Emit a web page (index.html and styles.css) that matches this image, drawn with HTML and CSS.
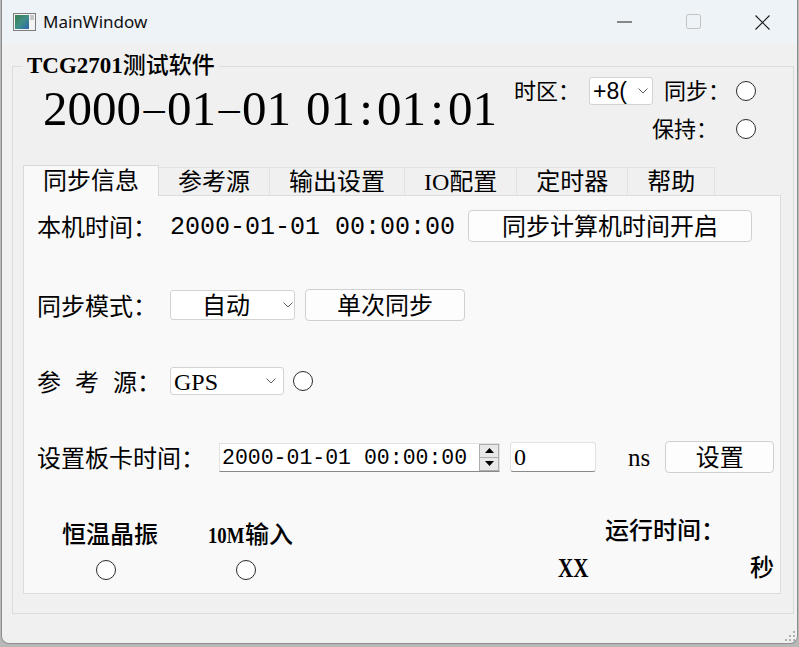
FILE: index.html
```html
<!DOCTYPE html>
<html lang="zh-CN">
<head>
<meta charset="utf-8">
<title>MainWindow</title>
<link rel="stylesheet" href="styles.css">
</head>
<body>
<div class="window">
  <div class="titlebar">
    <svg class="app-icon" width="23" height="18" viewBox="0 0 23 18">
      <defs>
        <linearGradient id="icg" x1="0" y1="0" x2="1" y2="1">
          <stop offset="0" stop-color="#3b7d4c"/>
          <stop offset="0.5" stop-color="#3e8f86"/>
          <stop offset="1" stop-color="#2e63b0"/>
        </linearGradient>
      </defs>
      <rect x="0.5" y="0.5" width="22" height="17" fill="#f4f4f4" stroke="#7d7d7d"/>
      <rect x="2" y="2" width="14" height="14" fill="url(#icg)"/>
      <rect x="17" y="2" width="4" height="5" fill="#c6c6c6"/>
    </svg>
    <span class="title">MainWindow</span>
    <div class="controls">
      <span class="ctl"><svg width="16" height="2" viewBox="0 0 16 2"><rect x="0" y="0.5" width="15" height="1" fill="#1a1a1a"/></svg></span>
      <span class="ctl"><svg width="16" height="16" viewBox="0 0 16 16"><rect x="0.5" y="0.5" width="14" height="14" rx="2" fill="none" stroke="#c2c2c2"/></svg></span>
      <span class="ctl ctl-close"><svg width="16" height="16" viewBox="0 0 16 16"><path d="M0.5 0.5 L14.5 14.5 M14.5 0.5 L0.5 14.5" stroke="#1a1a1a" stroke-width="1.1" fill="none"/></svg></span>
    </div>
  </div>

  <div class="client">
    <fieldset class="group">
      <legend><span class="bl">TCG2701</span><span class="bc">测试软件</span></legend>

      <div class="header">
        <div class="bigtime">2000<span class="dash"><span class="dash-g">-</span></span>01<span class="dash"><span class="dash-g">-</span></span>01<span class="gap"></span>01<span class="colon">:</span>01<span class="colon">:</span>01</div>
        <div class="status">
          <div class="status-row">
            <span class="slbl">时区：</span>
            <div class="combo tz">
              <span class="tz-text">+8(</span>
              <svg class="chev" width="10" height="6" viewBox="0 0 10 6"><polyline points="0.5,0.5 5,5 9.5,0.5" fill="none" stroke="#606060"/></svg>
            </div>
            <span class="slbl sync-lbl">同步：</span>
            <span class="radio"></span>
          </div>
          <div class="status-row end">
            <span class="slbl hold-lbl">保持：</span>
            <span class="radio"></span>
          </div>
        </div>
      </div>

      <div class="tabs">
        <div class="tabbar">
          <div class="tab active">同步信息</div>
          <div class="tab">参考源</div>
          <div class="tab">输出设置</div>
          <div class="tab">IO配置</div>
          <div class="tab">定时器</div>
          <div class="tab">帮助</div>
        </div>
        <div class="pane">
          <div class="row">
            <span class="lbl lbl-w">本机时间：</span>
            <span class="mono">2000-01-01 00:00:00</span>
            <div class="btn btn-sync">同步计算机时间开启</div>
          </div>

          <div class="row r2">
            <span class="lbl lbl-w">同步模式：</span>
            <div class="combo mode">
              <span class="mode-text">自动</span>
              <svg class="chev" width="10" height="6" viewBox="0 0 10 6"><polyline points="0.5,0.5 5,5 9.5,0.5" fill="none" stroke="#606060"/></svg>
            </div>
            <div class="btn btn-once">单次同步</div>
          </div>

          <div class="row r3">
            <span class="lbl lbl-w spaced">参 考 源：</span>
            <div class="combo src">
              <span class="src-text">GPS</span>
              <svg class="chev" width="10" height="6" viewBox="0 0 10 6"><polyline points="0.5,0.5 5,5 9.5,0.5" fill="none" stroke="#606060"/></svg>
            </div>
            <span class="radio src-radio"></span>
          </div>

          <div class="row r4">
            <span class="lbl lbl-w4">设置板卡时间：</span>
            <div class="spin">
              <span class="spin-text">2000-01-01 00:00:00</span>
              <div class="spin-btns">
                <span class="spin-btn"><svg width="9" height="5" viewBox="0 0 9 5"><polygon points="0,5 4.5,0 9,5" fill="#000"/></svg></span>
                <span class="spin-btn"><svg width="9" height="5" viewBox="0 0 9 5"><polygon points="0,0 4.5,5 9,0" fill="#000"/></svg></span>
              </div>
            </div>
            <div class="edit">0</div>
            <span class="ns">ns</span>
            <div class="btn btn-set">设置</div>
          </div>

          <div class="bottom">
            <div class="col col1">
              <span class="blbl bc">恒温晶振</span>
              <span class="radio"></span>
            </div>
            <div class="col col2">
              <span class="blbl"><span class="narrow">10M</span><span class="bc">输入</span></span>
              <span class="radio"></span>
            </div>
            <div class="runtime">
              <div class="rt-title bc">运行时间：</div>
              <div class="rt-row">
                <span class="xx">XX</span>
                <span class="sec bc">秒</span>
              </div>
            </div>
          </div>
        </div>
      </div>
    </fieldset>
  </div>

  <svg class="grip" width="11" height="11" viewBox="0 0 11 11">
    <rect x="8" y="0" width="2" height="2" fill="#b0b0b0"/>
    <rect x="4" y="4" width="2" height="2" fill="#b0b0b0"/>
    <rect x="8" y="4" width="2" height="2" fill="#b0b0b0"/>
    <rect x="0" y="8" width="2" height="2" fill="#b0b0b0"/>
    <rect x="4" y="8" width="2" height="2" fill="#b0b0b0"/>
    <rect x="8" y="8" width="2" height="2" fill="#b0b0b0"/>
  </svg>
</div>
</body>
</html>
```

FILE: styles.css
```css
* { box-sizing: border-box; }

html, body {
  margin: 0;
  padding: 0;
}

body {
  width: 799px;
  height: 647px;
  overflow: hidden;
  background: #b8b8b8;
  font-family: "Liberation Serif", "Noto Sans CJK SC", serif;
  color: #000;
}

.bl { font-weight: 700; }
.bc { font-weight: 500; }

.window {
  position: relative;
  margin-left: 1px;
  width: 797px;
  height: 644px;
  background: #f0f0f0;
  border: 1px solid #8e8e8e;
  border-top: none;
  border-radius: 0 0 8px 8px;
  overflow: hidden;
  display: flex;
  flex-direction: column;
}

/* ---------- title bar ---------- */
.titlebar {
  height: 44px;
  flex: none;
  background: #eef3f8;
  display: flex;
  align-items: center;
  padding-left: 11px;
}

.app-icon { flex: none; }

.title {
  margin-left: 7px;
  font-family: "Noto Sans", sans-serif;
  font-size: 17px;
  line-height: 20px;
  color: #111;
}

.controls {
  margin-left: auto;
  display: flex;
  height: 44px;
}

.ctl {
  width: 69px;
  height: 44px;
  display: flex;
  align-items: center;
  justify-content: center;
}

.ctl-close { padding-top: 1px; }

/* ---------- client / group box ---------- */
.client {
  flex: 1;
  padding: 11px 0 0 10px;
}

.group {
  margin: 0;
  width: 782px;
  min-width: 0;
  border: 1px solid #dcdcdc;
  padding: 0 12px 19px 10px;
}

.group legend {
  padding: 0 4px;
  font-size: 23px;
  line-height: 22px;
}

.header {
  display: flex;
  height: 88px;
}

.bigtime {
  margin-left: 20px;
  margin-top: 7px;
  font-family: "Liberation Serif", serif;
  font-size: 49px;
  line-height: 50px;
  white-space: nowrap;
  display: flex;
}

.dash {
  display: inline-block;
  width: 26px;
  text-align: center;
}

.dash-g {
  display: inline-block;
  transform: scale(1.7, 0.55);
}

.colon {
  display: inline-block;
  width: 22px;
  text-align: center;
}

.gap {
  display: inline-block;
  width: 15px;
}

.status {
  margin-left: auto;
  margin-right: 25px;
  display: flex;
  flex-direction: column;
}

.status-row {
  display: flex;
  align-items: center;
  height: 28px;
}

.status-row.end {
  justify-content: flex-end;
  margin-top: 10px;
}

.slbl {
  font-size: 22px;
  line-height: 26px;
  padding-top: 2px;
  white-space: nowrap;
}

.sync-lbl { margin-left: 11px; margin-right: 6px; }
.hold-lbl { margin-right: 18px; }

.radio {
  flex: none;
  width: 20px;
  height: 20px;
  border: 1px solid #2a2a2a;
  border-radius: 50%;
  background: #fff;
}

/* ---------- combo boxes ---------- */
.combo {
  flex: none;
  display: flex;
  align-items: center;
  background: #fff;
  border: 1px solid #d3d3d3;
  border-radius: 3px;
}

.chev { flex: none; }

.tz {
  margin-left: 9px;
  width: 64px;
  height: 28px;
  padding-left: 3px;
}

.tz-text {
  width: 35px;
  overflow: hidden;
  white-space: nowrap;
  font-family: "Liberation Sans", sans-serif;
  font-size: 23px;
  line-height: 26px;
}

.tz .chev { margin-left: 10px; }

.mode {
  width: 125px;
  height: 30px;
}

.mode-text {
  width: 110px;
  text-align: center;
  font-size: 24px;
  line-height: 26px;
  padding-top: 2px;
}

.mode .chev { margin-left: 2px; }

.src {
  width: 114px;
  height: 28px;
  padding-left: 3px;
}

.src-text {
  width: 90px;
  font-size: 24px;
  line-height: 26px;
  padding-top: 1px;
}

.src .chev { margin-left: 2px; }

/* ---------- tabs ---------- */
.tabbar {
  display: flex;
  align-items: flex-end;
  height: 30px;
  position: relative;
  z-index: 1;
}

.tab {
  height: 28px;
  padding: 1px 19px 0;
  border: 1px solid #e2e2e2;
  border-left: none;
  border-bottom: none;
  background: #f0f0f0;
  font-size: 24px;
  line-height: 27px;
  white-space: nowrap;
}

.tab.active {
  height: 31px;
  margin-bottom: -1px;
  padding: 1px 19px 0;
  background: #f9f9f9;
  border: 1px solid #d9d9d9;
  border-bottom: none;
  line-height: 28px;
}

.pane {
  height: 399px;
  background: #f9f9f9;
  border: 1px solid #dcdcdc;
  padding: 14px 0 0 13px;
  font-size: 24px;
}

.row {
  display: flex;
  align-items: center;
  height: 32px;
}

.r2 { margin-top: 47px; }
.r3 { margin-top: 44px; }
.r4 { margin-top: 44px; }

.lbl {
  line-height: 28px;
  padding-top: 4px;
  white-space: nowrap;
}

.lbl-w { width: 133px; flex: none; }
.lbl-w4 { width: 182px; flex: none; }

.spaced { word-spacing: 8px; }

.mono {
  font-family: "Liberation Mono", monospace;
  font-size: 25px;
  line-height: 28px;
  padding-top: 4px;
  white-space: nowrap;
}

.btn {
  flex: none;
  height: 32px;
  display: flex;
  align-items: center;
  justify-content: center;
  background: #fdfdfd;
  border: 1px solid #d0d0d0;
  border-radius: 4px;
  font-size: 24px;
  line-height: 27px;
  padding-top: 3px;
}

.btn-sync { margin-left: 13px; width: 284px; }
.btn-once { margin-left: 10px; width: 160px; }
.btn-set { margin-left: 15px; width: 109px; }

.src-radio { margin-left: 9px; }

/* ---------- spin box & line edit ---------- */
.spin {
  flex: none;
  width: 281px;
  height: 29px;
  display: flex;
  align-items: center;
  background: #fff;
  border: 1px solid #e2e2e2;
  border-bottom-color: #8a8a8a;
  padding-left: 2px;
}

.spin-text {
  font-family: "Liberation Mono", monospace;
  font-size: 21.5px;
  line-height: 26px;
  padding-top: 1px;
  white-space: nowrap;
}

.spin-btns {
  margin-left: auto;
  width: 20px;
  height: 27px;
  display: flex;
  flex-direction: column;
}

.spin-btn {
  flex: 1;
  display: flex;
  align-items: center;
  justify-content: center;
  background: #e8e8e8;
  border: 1px solid #adadad;
}

.spin-btn + .spin-btn { border-top: none; }

.edit {
  flex: none;
  margin-left: 10px;
  width: 86px;
  height: 30px;
  background: #fff;
  border: 1px solid #e2e2e2;
  border-bottom-color: #8a8a8a;
  border-radius: 3px;
  padding: 1px 0 0 3px;
  font-size: 24px;
  line-height: 27px;
}

.ns {
  margin-left: 32px;
  font-size: 25px;
  line-height: 28px;
  padding-top: 2px;
}

/* ---------- bottom section ---------- */
.bottom {
  display: flex;
  margin-top: 46px;
}

.col {
  display: flex;
  flex-direction: column;
  align-items: flex-start;
  padding-top: 4px;
}

.col1 { margin-left: 25px; }
.col2 { margin-left: 50px; }

.blbl {
  line-height: 24px;
  white-space: nowrap;
}

.narrow {
  display: inline-block;
  width: 37px;
  font-weight: 700;
  transform: scaleX(0.78);
  transform-origin: left center;
  white-space: nowrap;
}

.col .radio { margin-top: 13px; }
.col1 .radio { margin-left: 34px; }
.col2 .radio { margin-left: 28px; }

.runtime {
  margin-left: auto;
  margin-right: 6px;
  width: 216px;
}

.rt-title {
  padding-left: 47px;
  line-height: 24px;
}

.rt-row {
  display: flex;
  justify-content: space-between;
  align-items: flex-end;
  margin-top: 13px;
  height: 24px;
  line-height: 24px;
}

.xx {
  display: inline-block;
  width: 30px;
  font-size: 28px;
  font-weight: 700;
  transform: scaleX(0.75);
  transform-origin: left center;
  white-space: nowrap;
}

/* ---------- size grip (overlays corner) ---------- */
.grip {
  position: absolute;
  right: 1px;
  bottom: 1px;
}
```
